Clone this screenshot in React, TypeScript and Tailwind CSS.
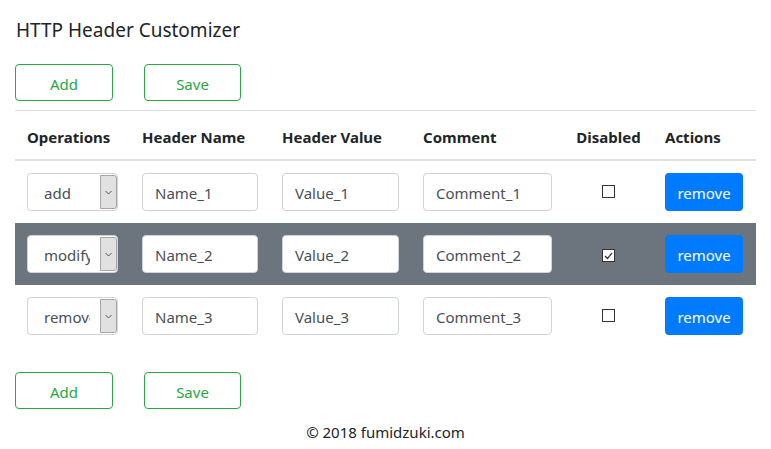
import React, { useState } from 'react';

type Row = {
  id: number;
  operation: string;
  name: string;
  value: string;
  comment: string;
  disabled: boolean;
};

const initialRows: Row[] = [
  { id: 1, operation: 'add', name: 'Name_1', value: 'Value_1', comment: 'Comment_1', disabled: false },
  { id: 2, operation: 'modify', name: 'Name_2', value: 'Value_2', comment: 'Comment_2', disabled: true },
  { id: 3, operation: 'remove', name: 'Name_3', value: 'Value_3', comment: 'Comment_3', disabled: false },
];

function OutlineButtons() {
  return (
    <div className="flex gap-[31px]">
      <button className="w-[98px] h-[37px] pt-[3px] rounded-[4px] border border-[#28a745] text-[#28a745] text-[15px]">
        Add
      </button>
      <button className="w-[97px] h-[37px] pt-[3px] rounded-[4px] border border-[#28a745] text-[#28a745] text-[15px]">
        Save
      </button>
    </div>
  );
}

function FakeSelect({ value }: { value: string }) {
  return (
    <div className="flex h-[38px] w-full rounded-[4px] border border-[#ced4da] bg-white overflow-hidden">
      <div className="flex-1 mr-[10px] overflow-hidden whitespace-nowrap pl-[16px] pt-[2px] leading-[34px] text-[15px] text-[#495057]">
        {value}
      </div>
      <div className="w-[17px] my-px flex items-center justify-center rounded-r-[3px] border border-[#a6a6a6] bg-[#e1e1e1]">
        <svg width="7" height="5" viewBox="0 0 7 5" fill="none">
          <path d="M0.5 1 L3.5 4 L6.5 1" stroke="#555" strokeWidth="1" />
        </svg>
      </div>
    </div>
  );
}

function TextBox({ value }: { value: string }) {
  return (
    <div className="h-[38px] w-full rounded-[4px] border border-[#ced4da] bg-white px-[12px] pt-[2px] leading-[34px] text-[15px] text-[#495057] whitespace-nowrap overflow-hidden">
      {value}
    </div>
  );
}

function CheckBox({ checked }: { checked: boolean }) {
  return (
    <span className="inline-flex h-[13px] w-[13px] items-center justify-center border border-[#333] bg-white">
      {checked && (
        <svg width="9" height="8" viewBox="0 0 9 8" fill="none">
          <path d="M1 4 L3.5 6.5 L8 1" stroke="#333" strokeWidth="1.2" />
        </svg>
      )}
    </span>
  );
}

const thClass = 'px-[12px] pt-[14px] pb-[10px] font-bold leading-[24px] border-b-2 border-[#dee2e6]';

export default function App() {
  const [rows] = useState<Row[]>(initialRows);

  return (
    <div className="min-h-screen bg-white px-[15px] text-[#212529]" style={{ fontFamily: '"Noto Sans", "Open Sans", sans-serif' }}>
      <h1 className="pt-[17px] pl-px text-[19px] leading-[26px] font-normal">HTTP Header Customizer</h1>

      <div className="mt-[21px]">
        <OutlineButtons />
      </div>

      <table className="mt-[9px] w-full table-fixed border-collapse text-[15px]">
        <thead>
          <tr className="border-t border-[#dee2e6]">
            <th className={`w-[115px] text-left ${thClass}`}>Operations</th>
            <th className={`w-[140px] text-left ${thClass}`}>Header Name</th>
            <th className={`w-[141px] text-left ${thClass}`}>Header Value</th>
            <th className={`w-[153px] text-left ${thClass}`}>Comment</th>
            <th className={`w-[89px] text-center ${thClass}`}>Disabled</th>
            <th className={`text-left ${thClass}`}>Actions</th>
          </tr>
        </thead>
        <tbody>
          {rows.map((row) => (
            <tr key={row.id} className={row.disabled ? 'bg-[#6c757d]' : 'bg-white'}>
              <td className="px-[12px] py-[12px]">
                <FakeSelect value={row.operation} />
              </td>
              <td className="px-[12px] py-[12px]">
                <TextBox value={row.name} />
              </td>
              <td className="px-[12px] py-[12px]">
                <TextBox value={row.value} />
              </td>
              <td className="px-[12px] py-[12px]">
                <TextBox value={row.comment} />
              </td>
              <td className="px-[12px] py-[12px] text-center">
                <CheckBox checked={row.disabled} />
              </td>
              <td className="px-[12px] py-[12px]">
                <button className="h-[38px] w-[78px] pt-[2px] rounded-[4px] bg-[#007bff] text-[15px] text-white">remove</button>
              </td>
            </tr>
          ))}
        </tbody>
      </table>

      <div className="mt-[25px]">
        <OutlineButtons />
      </div>

      <p className="mt-[11px] text-center text-[15px] leading-[24px]">© 2018 fumidzuki.com</p>
    </div>
  );
}
